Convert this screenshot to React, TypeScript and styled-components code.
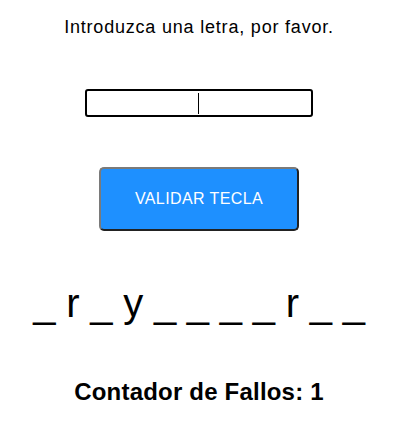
import React from "react";
import styled, { createGlobalStyle } from "styled-components";

const GlobalStyle = createGlobalStyle`
    body {
        margin: 0;
        background: #ffffff;
        font-family: "Liberation Sans", Arial, sans-serif;
        color: #000000;
    }
`;

const Page = styled.main`
    width: 398px;
    display: flex;
    flex-direction: column;
    align-items: center;
    padding-top: 17px;
`;

const Prompt = styled.p`
    margin: 0;
    font-size: 18px;
    line-height: 21px;
    letter-spacing: 0.8px;
`;

const InputWrap = styled.div`
    position: relative;
    margin-top: 51px;
    width: 228px;
    height: 28px;
`;

const LetterInput = styled.input`
    box-sizing: border-box;
    width: 100%;
    height: 100%;
    border: 2px solid #000000;
    border-radius: 3px;
    outline: none;
    padding: 0;
    text-align: center;
    font-family: inherit;
    font-size: 16px;
    caret-color: transparent;
    background: #ffffff;
`;

const Caret = styled.span`
    position: absolute;
    left: 113px;
    top: 4px;
    width: 1px;
    height: 21px;
    background: #000000;
    pointer-events: none;
`;

const ValidateButton = styled.button`
    box-sizing: border-box;
    margin-top: 50px;
    width: 200px;
    height: 64px;
    background: #1e90ff;
    color: #ffffff;
    font-family: inherit;
    font-size: 16px;
    letter-spacing: 0.4px;
    border: 2px solid;
    border-color: #7a7a7a #222222 #222222 #7a7a7a;
    border-radius: 5px;
    cursor: pointer;
`;

const Word = styled.div`
    margin-top: 49px;
    font-size: 40px;
    line-height: 46px;
    letter-spacing: -0.2px;
    white-space: pre;
`;

const Counter = styled.h2`
    margin: 52px 0 0;
    font-size: 24px;
    line-height: 28px;
    font-weight: bold;
    letter-spacing: 0.2px;
`;

const letters = ["_", "r", "_", "y", "_", "_", "_", "_", "r", "_", "_"];

export default function App() {
    return (
        <>
            <GlobalStyle />
            <Page>
                <Prompt>Introduzca una letra, por favor.</Prompt>
                <InputWrap>
                    <LetterInput type="text" maxLength={1} />
                    <Caret />
                </InputWrap>
                <ValidateButton>VALIDAR TECLA</ValidateButton>
                <Word>{letters.join(" ")}</Word>
                <Counter>Contador de Fallos: 1</Counter>
            </Page>
        </>
    );
}
